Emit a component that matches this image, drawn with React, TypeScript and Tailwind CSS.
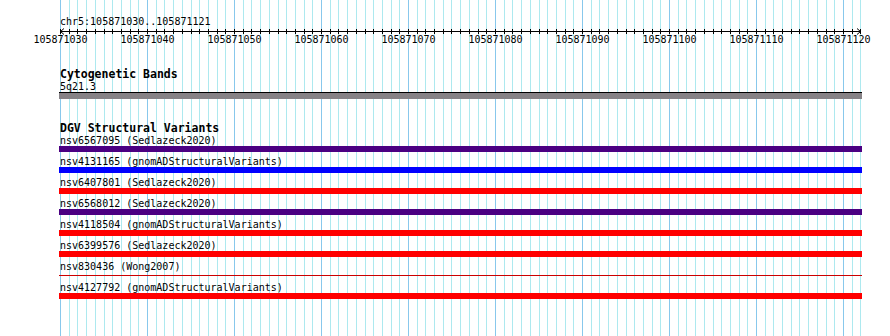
import React from 'react';

const START = 105871030;
const PX_PER_BASE = 8.7;
const ORIGIN = 60;

interface Variant {
  name: string;
  source: string;
  color: string;
  thin?: boolean;
}

const variants: Variant[] = [
  { name: 'nsv6567095', source: 'Sedlazeck2020', color: '#4b0082' },
  { name: 'nsv4131165', source: 'gnomADStructuralVariants', color: '#0000ff' },
  { name: 'nsv6407801', source: 'Sedlazeck2020', color: '#ff0000' },
  { name: 'nsv6568012', source: 'Sedlazeck2020', color: '#4b0082' },
  { name: 'nsv4118504', source: 'gnomADStructuralVariants', color: '#ff0000' },
  { name: 'nsv6399576', source: 'Sedlazeck2020', color: '#ff0000' },
  { name: 'nsv830436', source: 'Wong2007', color: '#cc0000', thin: true },
  { name: 'nsv4127792', source: 'gnomADStructuralVariants', color: '#ff0000' },
];

const mono = { fontFamily: '"DejaVu Sans Mono", "Liberation Mono", monospace' };

// vertical base grid behind the tracks
const GridLines: React.FC = () => {
  const lines = [];
  for (let k = 0; k <= 92; k++) {
    const x = Math.round(ORIGIN + k * PX_PER_BASE);
    const major = k % 10 === 0;
    lines.push(
      <rect key={k} x={x} y={0} width={1} height={336} fill={major ? '#88c8ec' : '#ade9ef'} />
    );
  }
  return (
    <svg className="absolute left-0 top-0" width={890} height={336}>
      {lines}
    </svg>
  );
};

const Ruler: React.FC = () => {
  const ticks = [];
  const labels = [];
  for (let k = 0; k <= 92; k++) {
    const x = Math.round(ORIGIN + k * PX_PER_BASE) + 0.5;
    ticks.push(<line key={k} x1={x} x2={x} y1={2} y2={7} stroke="#000" strokeWidth={1} />);
    if (k % 10 === 0) {
      labels.push(
        <text key={k} x={x} y={16} textAnchor="middle" fontSize={10} fill="#000" style={mono}>
          {START + k}
        </text>
      );
    }
  }
  return (
    <svg className="relative block" width={890} height={20}>
      <line x1={60} x2={861} y1={4.5} y2={4.5} stroke="#000" strokeWidth={1} />
      <polyline points="64,1.5 60.5,4.5 64,7.5" fill="none" stroke="#000" strokeWidth={1} />
      <polyline points="857,1.5 860.5,4.5 857,7.5" fill="none" stroke="#000" strokeWidth={1} />
      {ticks}
      {labels}
    </svg>
  );
};

export default function App() {
  return (
    <div className="relative w-[890px] h-[336px] overflow-hidden bg-white text-black" style={mono}>
      <GridLines />
      <div className="relative pt-[15px]">
        <div className="pl-[60px] h-[12px] pt-px text-[10px] leading-[11px]">chr5:105871030..105871121</div>
        <Ruler />

        <div className="pl-[59px] w-[862px]">
          <div className="mt-[21px] pl-px h-[13px] text-[11.5px] leading-[13px] font-bold">Cytogenetic Bands</div>
          <div className="pl-px h-[11px] pt-px text-[10px] leading-[10px]">5q21.3</div>
          <div className="h-[7px] border-t border-black bg-[#868286]" />

          <div className="mt-[22px] pl-px h-[15px] pt-px text-[11.5px] leading-[13px] font-bold">DGV Structural Variants</div>
          <div className="flex flex-col">
            {variants.map((v) => (
              <div key={v.name} className="h-[21px]">
                <div className="pl-px h-[10px] text-[10px] leading-[10px] whitespace-pre">
                  {v.name} ({v.source})
                </div>
                {v.thin ? (
                  <div className="h-[6px] flex items-center">
                    <div className="w-full h-px" style={{ backgroundColor: v.color }} />
                  </div>
                ) : (
                  <div className="h-[6px]" style={{ backgroundColor: v.color }} />
                )}
              </div>
            ))}
          </div>
        </div>
      </div>
    </div>
  );
}
